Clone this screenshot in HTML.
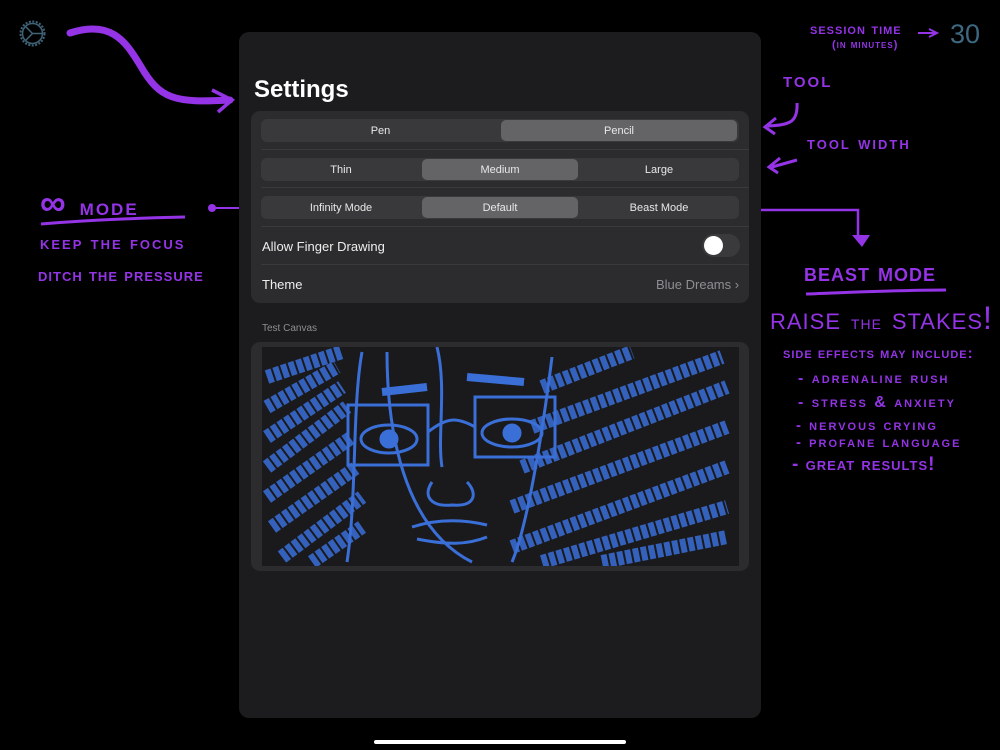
<!DOCTYPE html>
<html><head><meta charset="utf-8"><style>
body{margin:0;width:1000px;height:750px;background:#000;position:relative;overflow:hidden;font-family:"Liberation Sans",sans-serif}
.a{position:absolute}
.panel{left:239px;top:32px;width:522px;height:686px;background:#1c1c1e;border-radius:10px}
.grp{background:#2c2c2e;border-radius:9px}
.seg{position:absolute;left:261px;width:478px;height:23px;background:#39393c;border-radius:6px;font-size:11px;color:#e8e8e8}
.seg div{position:absolute;top:0;height:23px;line-height:24px;text-align:center}
.seg .sel{background:#646467;border-radius:5px;top:1px;height:21px;line-height:22px}
.sep{position:absolute;left:261px;width:488px;height:1px;background:#3a3a3c}
.h{color:#9434e6;font-family:"Liberation Sans",sans-serif;font-variant:small-caps;letter-spacing:2px;position:absolute;white-space:nowrap;font-weight:bold}
</style></head><body>
<svg class="a" style="left:17px;top:18px" width="31" height="31" viewBox="0 0 31 31"><circle cx="15.5" cy="15.5" r="12" fill="none" stroke="#3f6478" stroke-width="2" stroke-dasharray="2 1.5"/><circle cx="15.5" cy="15.5" r="10" fill="none" stroke="#3f6478" stroke-width="1.5"/><path d="M15.5 15.5L9 9M15.5 15.5L9 22M15.5 15.5H25" stroke="#3f6478" stroke-width="1.5"/></svg>
<svg class="a" style="left:0;top:0" width="1000" height="750">
<path d="M70 33C110 20 125 40 140 65C160 100 175 103 230 100" stroke="#9434e6" stroke-width="7" fill="none" stroke-linecap="round"/>
<path d="M212 90L232 100L218 112" stroke="#9434e6" stroke-width="3.5" fill="none"/>
<path d="M212 208H272" stroke="#9434e6" stroke-width="2"/><circle cx="212" cy="208" r="4" fill="#9434e6"/>
<path d="M725 210H858V235" stroke="#9434e6" stroke-width="2.5" fill="none"/><path d="M852 235H870L862 247Z" fill="#9434e6"/>
<path d="M797 103C798 122 790 125 768 126M776 118L765 127L775 134" stroke="#9434e6" stroke-width="3" fill="none"/>
<path d="M797 160L772 167M780 158L769 167L778 173" stroke="#9434e6" stroke-width="3" fill="none"/>
<path d="M41 224C90 220 140 218 185 217" stroke="#9434e6" stroke-width="3" fill="none"/>
<path d="M806 294C860 292 900 290 946 290" stroke="#9434e6" stroke-width="3" fill="none"/>
<path d="M918 33H935M929 29L937 33L929 37" stroke="#9434e6" stroke-width="2" fill="none"/>
</svg>
<div class="h" style="left:40px;top:182px;font-size:36px">∞ <span style="font-size:24px">mode</span></div>
<div class="h" style="left:40px;top:233px;font-size:19px">keep the focus</div>
<div class="h" style="left:38px;top:265px;font-size:19px;letter-spacing:1px">ditch the pressure</div>
<div class="h" style="left:810px;top:21px;font-size:16px;letter-spacing:1px">session time</div>
<div class="h" style="left:832px;top:39px;font-size:11px;letter-spacing:1px">(in minutes)</div>
<div class="a" style="left:950px;top:19px;font-size:27px;color:#3d6880">30</div>
<div class="h" style="left:783px;top:67px;font-size:22px">tool</div>
<div class="h" style="left:807px;top:133px;font-size:19px">tool width</div>
<div class="h" style="left:804px;top:259px;font-size:25px;letter-spacing:1px">beast mode</div>
<div class="h" style="left:770px;top:300px;font-size:32px;letter-spacing:1px;font-weight:normal">raise <span style="font-size:20px">the</span> stakes!</div>
<div class="h" style="left:783px;top:345px;font-size:15px;letter-spacing:1px">side effects may include:</div>
<div class="h" style="left:798px;top:370px;font-size:16px">- adrenaline rush</div>
<div class="h" style="left:798px;top:394px;font-size:16px">- stress &amp; anxiety</div>
<div class="h" style="left:796px;top:417px;font-size:15px">- nervous crying</div>
<div class="h" style="left:796px;top:434px;font-size:15px">- profane language</div>
<div class="h" style="left:792px;top:454px;font-size:19px;letter-spacing:1px">- great results!</div>
<div class="a panel"></div>
<div class="a" style="left:254px;top:76px;font-size:24px;font-weight:bold;color:#fff">Settings</div>
<div class="a grp" style="left:251px;top:111px;width:498px;height:192px"></div>
<div class="seg" style="top:119px"><div style="left:0;width:239px">Pen</div><div class="sel" style="left:240px;width:236px">Pencil</div></div>
<div class="sep" style="top:149px"></div>
<div class="seg" style="top:158px"><div style="left:0;width:160px">Thin</div><div class="sel" style="left:161px;width:156px">Medium</div><div style="left:318px;width:160px">Large</div></div>
<div class="sep" style="top:187px"></div>
<div class="seg" style="top:196px"><div style="left:0;width:160px">Infinity Mode</div><div class="sel" style="left:161px;width:156px">Default</div><div style="left:318px;width:160px">Beast Mode</div></div>
<div class="sep" style="top:226px"></div>
<div class="a" style="left:262px;top:239px;font-size:13px;color:#eee">Allow Finger Drawing</div>
<div class="a" style="left:702px;top:234px;width:38px;height:23px;border-radius:12px;background:#3a3a3c"></div>
<div class="a" style="left:704px;top:236px;width:19px;height:19px;border-radius:50%;background:#fff"></div>
<div class="sep" style="top:264px"></div>
<div class="a" style="left:262px;top:277px;font-size:13px;color:#eee">Theme</div>
<div class="a" style="left:656px;top:277px;font-size:13px;color:#8e8e93">Blue Dreams ›</div>
<div class="a" style="left:262px;top:323px;font-size:10px;color:#8e8e93">Test Canvas</div>
<div class="a grp" style="left:251px;top:342px;width:498px;height:229px"></div>
<svg class="a" style="left:262px;top:347px" width="477" height="219" viewBox="0 0 477 219"><rect width="477" height="219" fill="#1a1a1c"/>
<g stroke="#3a6fd8" fill="none">
<path d="M5 30L80 5M5 60L75 20M5 90L80 40M5 120L85 60M5 150L90 90M10 180L95 120M20 210L100 150M50 215L100 180" stroke-width="14" stroke-dasharray="6 2" opacity=".85"/>
<path d="M280 40L370 5M270 80L460 10M260 120L465 40M250 160L465 80M250 200L465 120M280 215L465 160M340 215L465 190" stroke-width="14" stroke-dasharray="6 2" opacity=".85"/>
<path d="M85 215C95 150 90 60 100 5M125 5C125 80 140 180 210 215M290 10C280 90 265 180 250 215M175 0C185 40 175 90 180 120" stroke-width="3"/>
<rect x="86" y="58" width="80" height="60" stroke-width="3"/><rect x="213" y="50" width="80" height="60" stroke-width="3"/>
<path d="M166 85C185 70 195 70 213 80" stroke-width="3"/>
<ellipse cx="127" cy="92" rx="28" ry="14" stroke-width="3"/><circle cx="127" cy="92" r="9" fill="#3a6fd8"/>
<ellipse cx="250" cy="86" rx="30" ry="14" stroke-width="3"/><circle cx="250" cy="86" r="9" fill="#3a6fd8"/>
<path d="M120 45L165 40M205 30L262 35" stroke-width="8"/>
<path d="M170 135C160 150 170 160 190 158C215 160 215 145 205 135M150 180C175 172 200 172 225 178M155 192C185 198 205 198 225 190" stroke-width="3"/>
</g></svg>
<div class="a" style="left:374px;top:740px;width:252px;height:4px;border-radius:2px;background:#fff"></div>
</body></html>
